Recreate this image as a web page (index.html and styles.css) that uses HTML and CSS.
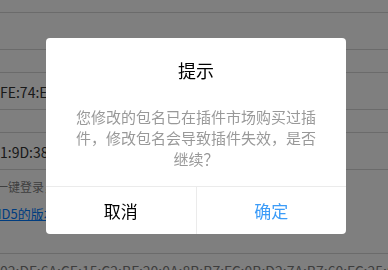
FILE: index.html
```html
<!DOCTYPE html>
<html lang="zh-CN">
<head>
  <meta charset="UTF-8">
  <meta name="viewport" content="width=device-width, initial-scale=1.0">
  <title>应用证书信息</title>
  <link rel="stylesheet" href="styles.css">
</head>
<body>
  <div class="page">
    <div class="row row-top"></div>
    <div class="row row-tall"></div>
    <div class="row row-label"></div>
    <div class="row row-tall value">FE:74:E2:9A</div>
    <div class="row row-label"></div>
    <div class="row row-tall value">1:9D:38:B2</div>
    <div class="row row-note">
      <div class="note">一键登录，需</div>
      <a class="link" href="#">MD5的版本</a>
    </div>
    <div class="row value bottom">02:DF:6A:CE:15:C2:BF:20:0A:8B:B7:FC:0B:D2:7A:B7:60:FC:25:0E</div>
  </div>

  <!-- 弹窗遮罩 -->
  <div class="mask">
    <div class="modal">
      <div class="modal-hd">提示</div>
      <div class="modal-bd">您修改的包名已在插件市场购买过插件，修改包名会导致插件失效，是否继续？</div>
      <div class="modal-ft">
        <div class="modal-btn">取消</div>
        <div class="modal-btn primary">确定</div>
      </div>
    </div>
  </div>
</body>
</html>
```

FILE: styles.css
```css
* {
  box-sizing: border-box;
}

body {
  margin: 0;
  font-family: "Noto Sans CJK SC", "Noto Sans", sans-serif;
  font-size: 14px;
  color: #333;
  background-color: #fff;
  overflow: hidden;
}

/* 背景列表 */
.page {
  display: flex;
  flex-direction: column;
}

.row {
  border-bottom: 1px solid #d6d6d6;
  white-space: nowrap;
  overflow: hidden;
}

.row-top {
  height: 13px;
}

.row-tall {
  height: 37px;
}

.row-label {
  height: 23px;
}

.value {
  display: flex;
  align-items: center;
  padding-top: 2px;
}

.row-note {
  height: 84px;
  display: flex;
  flex-direction: column;
  gap: 8px;
  padding-top: 8px;
}

.note {
  font-size: 12px;
  line-height: 18px;
  color: #808080;
  text-indent: -4px;
}

.link {
  font-size: 13px;
  line-height: 20px;
  color: #007aff;
  text-indent: -9px;
}

.bottom {
  border-bottom: none;
  padding-top: 7px;
  line-height: 20px;
  color: #7a7a7a;
}

/* 弹窗 */
.mask {
  position: fixed;
  top: 0;
  left: 0;
  right: 0;
  bottom: 0;
  padding: 2px 0 0 4px;
  background-color: rgba(0, 0, 0, 0.5);
  display: flex;
  align-items: center;
  justify-content: center;
}

.modal {
  width: 300px;
  background-color: #fff;
  border-radius: 4px;
  overflow: hidden;
  text-align: center;
}

.modal-hd {
  padding: 20px 24px 0;
  font-size: 18px;
  line-height: 25px;
  color: #000;
}

.modal-bd {
  padding: 23px 29px 17px;
  font-size: 15px;
  line-height: 21px;
  color: #999;
}

.modal-ft {
  display: flex;
  border-top: 1px solid #ebebeb;
}

.modal-btn {
  flex: 1;
  height: 47px;
  line-height: 47px;
  font-size: 17px;
  color: #000;
}

.modal-btn + .modal-btn {
  border-left: 1px solid #ebebeb;
}

.primary {
  color: #3c9cf8;
}
```
